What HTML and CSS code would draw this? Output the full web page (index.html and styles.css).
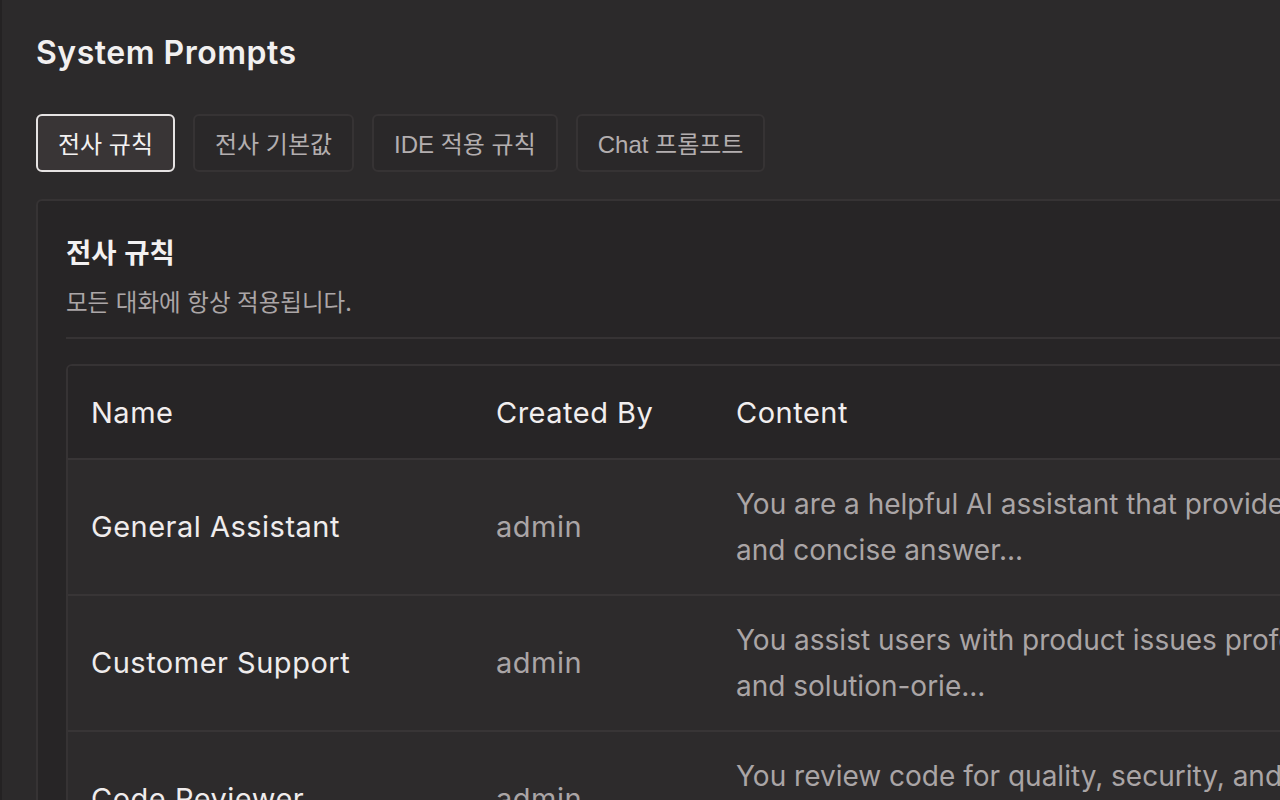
FILE: index.html
```html
<!DOCTYPE html>
<html lang="ko">
<head>
    <meta charset="UTF-8">
    <meta name="viewport" content="width=device-width, initial-scale=1.0">
    <title>System Prompts</title>
    <link rel="stylesheet" href="styles.css">
</head>
<body>
    <main class="page">
        <h1 class="page-title">System Prompts</h1>

        <div class="tabs">
            <button class="tab active">전사 규칙</button>
            <button class="tab">전사 기본값</button>
            <button class="tab">IDE 적용 규칙</button>
            <button class="tab">Chat 프롬프트</button>
        </div>

        <section class="card">
            <div class="card-header">
                <h2>전사 규칙</h2>
                <p>모든 대화에 항상 적용됩니다.</p>
            </div>

            <div class="table-wrap">
                <table class="prompt-table">
                    <thead>
                        <tr>
                            <th class="col-name">Name</th>
                            <th class="col-user">Created By</th>
                            <th class="col-content">Content</th>
                            <th class="col-date">Updated</th>
                        </tr>
                    </thead>
                    <tbody>
                        <tr>
                            <td class="name">General Assistant</td>
                            <td class="muted">admin</td>
                            <td class="muted content">You are a helpful AI assistant that provides clear and concise answer...</td>
                            <td class="muted">2024-05-02</td>
                        </tr>
                        <tr>
                            <td class="name">Customer Support</td>
                            <td class="muted">admin</td>
                            <td class="muted content">You assist users with product issues professionally and solution-orie...</td>
                            <td class="muted">2024-05-02</td>
                        </tr>
                        <tr>
                            <td class="name">Code Reviewer</td>
                            <td class="muted">admin</td>
                            <td class="muted content">You review code for quality, security, and best practices with clear...</td>
                            <td class="muted">2024-05-02</td>
                        </tr>
                    </tbody>
                </table>
            </div>
        </section>
    </main>
</body>
</html>
```

FILE: styles.css
```css
html, body {
    margin: 0;
    padding: 0;
    height: 100%;
    overflow: hidden;
    background-color: #2c2a2b;
}
body {
    font-family: Inter, "Noto Sans CJK KR", sans-serif;
    color: #efecec;
}
.page {
    box-sizing: border-box;
    height: 100%;
    border-left: 2px solid #242223;
    padding: 35px 0 0 34px;
}
.page-title {
    margin: 0;
    font-size: 32px;
    line-height: 36px;
    font-weight: 600;
    letter-spacing: 0.5px;
    color: #f2f0f0;
}
.tabs {
    display: flex;
    gap: 18px;
    margin-top: 43px;
}
.tab {
    height: 58px;
    padding: 0 20px 2px;
    border: 2px solid #363334;
    border-radius: 6px;
    background-color: #2a2829;
    color: #b3aeaf;
    font-family: "Liberation Sans", "Noto Sans CJK KR", sans-serif;
    font-size: 24px;
    cursor: pointer;
}
.tab.active {
    border-color: #e6e3e3;
    background-color: #393536;
    color: #f3f1f1;
}
.card {
    width: 1700px;
    margin-top: 27px;
    padding: 33px 28px 40px;
    border: 2px solid #363334;
    border-radius: 6px;
    background-color: #272526;
}
.card-header {
    padding-bottom: 20px;
    border-bottom: 2px solid #363334;
}
.card-header h2 {
    margin: 0;
    font-family: "Noto Sans CJK KR", sans-serif;
    font-size: 27.5px;
    line-height: 34px;
    font-weight: 700;
    color: #f3f1f1;
}
.card-header p {
    margin: 17px 0 0;
    font-family: "Noto Sans CJK KR", sans-serif;
    font-size: 23.5px;
    line-height: 32px;
    color: #aba6a7;
}
.table-wrap {
    margin-top: 25px;
    border: 2px solid #363334;
    border-radius: 6px;
    overflow: hidden;
}
.prompt-table {
    width: 100%;
    border-collapse: collapse;
    font-size: 29px;
    letter-spacing: 0.5px;
    table-layout: fixed;
}
.prompt-table th {
    height: 92px;
    padding: 0 23px;
    text-align: left;
    font-weight: 400;
    color: #f1eeee;
    background-color: #272526;
}
.prompt-table td {
    padding: 21px 23px;
    line-height: 46px;
    vertical-align: middle;
    background-color: #2d2b2c;
    border-top: 2px solid #383536;
}
.prompt-table td.content {
    font-size: 28px;
    letter-spacing: 0;
}
.col-name { width: 359px; }
.col-user { width: 194px; }
.col-content { width: 675px; }
.name {
    color: #efecec;
}
.muted {
    color: #aaa5a6;
}
```
